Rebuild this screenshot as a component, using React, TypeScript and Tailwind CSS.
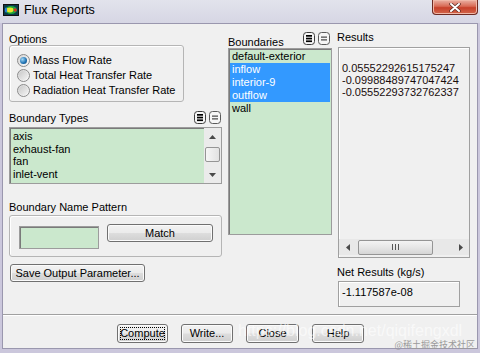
import React from 'react';

const boundaryTypes = ['axis', 'exhaust-fan', 'fan', 'inlet-vent'];
const boundaries = [
  { name: 'default-exterior', selected: false },
  { name: 'inflow', selected: true },
  { name: 'interior-9', selected: true },
  { name: 'outflow', selected: true },
  { name: 'wall', selected: false },
];
const results = ['0.05552292615175247', '-0.09988489747047424', '-0.05552293732762337'];

const Radio: React.FC<{ checked?: boolean; label: string }> = ({ checked, label }) => (
  <div className="flex h-[15px] items-center gap-[3px]">
    <span className="flex h-[13px] w-[13px] items-center justify-center rounded-full border border-[#8b8b8b] bg-[linear-gradient(135deg,#d4d4d4,#fbfbfb)]">
      {checked ? (
        <span className="h-[7px] w-[7px] rounded-full bg-[radial-gradient(circle_at_35%_35%,#9fd6f5,#1c6fb0_60%,#0d3f6e)]" />
      ) : (
        <span className="h-[9px] w-[9px] rounded-full bg-[linear-gradient(135deg,#c9c9c9,#f3f3f3)]" />
      )}
    </span>
    <span className="leading-[13px]">{label}</span>
  </div>
);

const SelectIcons: React.FC = () => (
  <div className="flex gap-[3px]">
    <svg width="12" height="13" viewBox="0 0 12 13">
      <rect x="0.5" y="0.5" width="11" height="12" rx="3" fill="#f6f6f6" stroke="#3e3e3e" />
      <rect x="3" y="3" width="6" height="1.7" fill="#000" />
      <rect x="3" y="5.7" width="6" height="1.7" fill="#000" />
      <rect x="3" y="8.4" width="6" height="1.7" fill="#000" />
    </svg>
    <svg width="12" height="13" viewBox="0 0 12 13">
      <rect x="0.5" y="0.5" width="11" height="12" rx="3" fill="#f6f6f6" stroke="#5a5a5a" />
      <rect x="3" y="4.6" width="6" height="1" fill="#222" />
      <rect x="3" y="7.4" width="6" height="1" fill="#222" />
    </svg>
  </div>
);

const WinButton: React.FC<{ label: string; className: string; focused?: boolean }> = ({ label, className, focused }) => (
  <div
    className={`relative flex items-center justify-center rounded-[3px] border border-[#707070] bg-[linear-gradient(#f2f2f2,#ebebeb_48%,#dddddd_52%,#cfcfcf)] text-[11px] leading-none shadow-[inset_0_0_0_1px_#fbfbfb] ${className}`}
  >
    {focused && <span className="absolute inset-[2px] border border-dotted border-black" />}
    {label}
  </div>
);

const Arrow: React.FC<{ dir: 'up' | 'down' | 'left' | 'right' }> = ({ dir }) => {
  const pts = {
    up: '0,4 3.5,0 7,4',
    down: '0,0 7,0 3.5,4',
    left: '4,0 4,7 0,3.5',
    right: '0,0 0,7 4,3.5',
  }[dir];
  const horizontal = dir === 'left' || dir === 'right';
  return (
    <svg width={horizontal ? 4 : 7} height={horizontal ? 7 : 4} viewBox={horizontal ? '0 0 4 7' : '0 0 7 4'}>
      <polygon points={pts} fill="#4a4a4a" />
    </svg>
  );
};

const FluentIcon: React.FC = () => (
  <svg width="16" height="12" viewBox="0 0 16 12">
    <rect x="0.5" y="0.5" width="15" height="11" fill="#0c3b4a" stroke="#111" />
    <ellipse cx="8" cy="6" rx="6" ry="4" fill="#1fa83a" />
    <ellipse cx="7" cy="6" rx="3.5" ry="2.4" fill="#e8e52a" />
    <ellipse cx="12.2" cy="6" rx="1.6" ry="1.8" fill="#d9302a" />
    <ellipse cx="3" cy="6" rx="1.2" ry="2.5" fill="#2a7fd8" />
  </svg>
);

export default function App() {
  return (
    <div className="relative flex h-[353px] w-[480px] flex-col overflow-hidden bg-[#cbc7dc] px-[2px] pb-[4px] font-['Liberation_Sans',Arial,sans-serif] text-[11px] text-black">
      {/* title bar */}
      <div className="-mx-[2px] flex h-[23px] items-start bg-[linear-gradient(#e2e3ec,#d6d6e4)]">
        <div className="ml-[3px] mt-[4px]">
          <FluentIcon />
        </div>
        <span className="ml-[5px] mt-[3px] text-[12.5px] leading-[15px]">Flux Reports</span>
        <div className="ml-auto mr-[2px] flex h-[15px] w-[46px] items-center justify-center rounded-b-[4px] border border-t-0 border-[#6e2a22] bg-[linear-gradient(#eab1a4,#d86a55_45%,#c7402a_55%,#d2674c)] shadow-[inset_0_0_0_1px_#f0b8a8]">
          <svg width="12" height="9" viewBox="0 0 12 9">
            <path d="M2 1 L10 8 M10 1 L2 8" stroke="#5a2a22" strokeWidth="3.4" strokeLinecap="round" />
            <path d="M2 1 L10 8 M10 1 L2 8" stroke="#ffffff" strokeWidth="2" strokeLinecap="round" />
          </svg>
        </div>
      </div>

      {/* client area */}
      <div className="flex flex-1 flex-col border border-[#9a97ae] bg-[#f0f0f0]">
        <div className="flex h-[290px] pl-[6px] pt-[9px]">
          {/* left column */}
          <div className="flex w-[213px] flex-col">
            <div className="h-[12px] leading-[12px]">Options</div>
            <div className="flex h-[57px] w-[175px] flex-col rounded-[3px] border border-[#b5b5b5] pl-[7px] pt-[7px] shadow-[inset_1px_1px_0_#fff]">
              <Radio checked label="Mass Flow Rate" />
              <Radio label="Total Heat Transfer Rate" />
              <Radio label="Radiation Heat Transfer Rate" />
            </div>

            <div className="mt-[8px] flex h-[15px] items-end justify-between">
              <span className="leading-[13px]">Boundary Types</span>
              <div className="mb-[1px] mr-[1px]">
                <SelectIcons />
              </div>
            </div>
            <div className="mt-[2px] flex h-[57px] border border-[#9c9c9c] bg-[#cbe8cd] shadow-[inset_1px_1px_0_#7a7a7a]">
              <div className="flex-1 pl-[3px] pt-[2px]">
                {boundaryTypes.map((t) => (
                  <div key={t} className="h-[12.5px] leading-[12.5px]">
                    {t}
                  </div>
                ))}
              </div>
              <div className="flex w-[17px] flex-col bg-[#ebebeb]">
                <div className="flex h-[17px] items-center justify-center">
                  <Arrow dir="up" />
                </div>
                <div className="flex flex-1 justify-center pt-[2px]">
                  <div className="h-[15px] w-[15px] rounded-[2px] border border-[#959595] bg-[linear-gradient(90deg,#f6f6f6,#e2e2e2)]" />
                </div>
                <div className="flex h-[17px] items-center justify-center">
                  <Arrow dir="down" />
                </div>
              </div>
            </div>

            <div className="mt-[17px] h-[13px] leading-[13px]">Boundary Name Pattern</div>
            <div className="mt-[1px] flex h-[42px] items-start gap-[8px] rounded-[3px] border border-[#b5b5b5] pl-[9px] pt-[8px] shadow-[inset_1px_1px_0_#fff]">
              <div className="mt-[2px] h-[23px] w-[80px] border border-[#9c9c9c] bg-[#cbe8cd] shadow-[inset_1px_1px_0_#7a7a7a]" />
              <WinButton label="Match" className="h-[18px] w-[106px]" />
            </div>

            <WinButton label="Save Output Parameter..." className="ml-[1px] mt-[7px] h-[18px] w-[135px]" />
          </div>

          {/* middle column */}
          <div className="ml-[6px] flex w-[104px] flex-col">
            <div className="flex h-[15px] items-start justify-between">
              <span className="mt-[3px] leading-[13px]">Boundaries</span>
              <div className="-mt-[1px] mr-[2px]">
                <SelectIcons />
              </div>
            </div>
            <div className="h-[187px] border border-[#9c9c9c] bg-[#cbe8cd] p-[1px] shadow-[inset_1px_1px_0_#7a7a7a]">
              {boundaries.map((b) => (
                <div
                  key={b.name}
                  className={`h-[13px] pl-[2px] leading-[13px] ${b.selected ? 'bg-[#3399ff] text-white' : ''}`}
                >
                  {b.name}
                </div>
              ))}
            </div>
          </div>

          {/* right column */}
          <div className="ml-[5px] flex w-[134px] flex-col">
            <div className="-mt-[2px] h-[13px] leading-[13px]">Results</div>
            <div className="ml-[1px] mt-[3px] flex h-[211px] w-[132px] flex-col border border-[#a0a0a0] bg-[#f0f0f0] shadow-[inset_1px_1px_0_#fff]">
              <div className="flex-1 pl-[3px] pt-[14px] text-[#1a0d0d]">
                {results.map((r) => (
                  <div key={r} className="h-[12px] leading-[12px]">
                    {r}
                  </div>
                ))}
              </div>
              <div className="mb-[2px] flex h-[16px] items-stretch bg-[#e8e8e8]">
                <div className="flex w-[17px] items-center justify-center">
                  <Arrow dir="left" />
                </div>
                <div className="flex flex-1 items-center pl-[2px]">
                  <div className="flex h-[15px] w-[75px] items-center justify-center gap-[2px] rounded-[2px] border border-[#959595] bg-[linear-gradient(#f4f4f4,#e6e6e6_50%,#d6d6d6)]">
                    <span className="h-[6px] w-[1px] bg-[#555]" />
                    <span className="h-[6px] w-[1px] bg-[#555]" />
                    <span className="h-[6px] w-[1px] bg-[#555]" />
                  </div>
                </div>
                <div className="flex w-[17px] items-center justify-center">
                  <Arrow dir="right" />
                </div>
              </div>
            </div>
            <div className="mt-[8px] h-[13px] leading-[13px]">Net Results (kg/s)</div>
            <div className="ml-[1px] mt-[2px] h-[26px] w-[122px] border border-[#a0a0a0] pl-[3px] pt-[4px] shadow-[inset_1px_1px_0_#fff]">
              <div className="leading-[13px]">-1.117587e-08</div>
            </div>
          </div>
        </div>

        {/* separator */}
        <div className="h-[2px] border-b border-t border-b-white border-t-[#a0a0a0]" />

        {/* bottom buttons */}
        <div className="flex gap-[13px] pl-[114px] pt-[8px]">
          <WinButton label="Compute" focused className="h-[19px] w-[51px]" />
          <WinButton label="Write..." className="h-[19px] w-[52px]" />
          <WinButton label="Close" className="h-[19px] w-[53px]" />
          <WinButton label="Help" className="h-[19px] w-[52px]" />
        </div>
      </div>

      {/* watermarks */}
      <div className="pointer-events-none absolute left-[238px] top-[322px] text-[16px] leading-[18px] text-white/60">
        https://blog.csdn.net/qiqifengxdl
      </div>
      <div className="pointer-events-none absolute right-[5px] top-[340px] font-['Noto_Sans_CJK_SC',sans-serif] text-[9px] leading-[10px] text-[#9a9a9a]">
        @稀土掘金技术社区
      </div>
    </div>
  );
}
